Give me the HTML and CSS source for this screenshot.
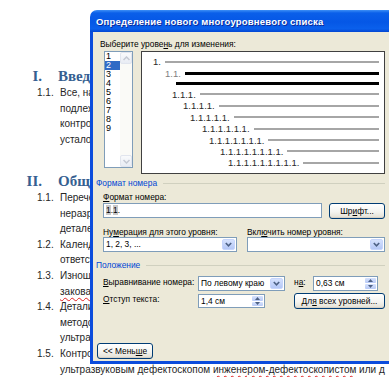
FILE: index.html
```html
<!DOCTYPE html>
<html lang="ru">
<head>
    <meta charset="utf-8">
    <title>Определение нового многоуровневого списка</title>
    <link rel="stylesheet" href="styles.css">
</head>
<body>
    <div class="doc">
        <h2 class="doc-head"><span class="head-num">I.</span><span>Введение</span></h2>
        <div class="doc-item">
            <span class="item-num">1.1.</span>
            <p>Все, находящиеся в эксплуатации узлы и детали,<br>подлежат периодическому неразрушающему<br>контролю с целью своевременного выявления<br>усталостных трещин и дефектов.</p>
        </div>

        <h2 class="doc-head second"><span class="head-num">II.</span><span>Общие положения</span></h2>
        <div class="doc-item">
            <span class="item-num">1.1.</span>
            <p>Перечень деталей, подлежащих<br>неразрушающему контролю, и методы контроля<br>деталей определяются настоящей инструкцией.</p>
        </div>
        <div class="doc-item">
            <span class="item-num">1.2.</span>
            <p>Календарные сроки контроля и<br>ответственность за их соблюдение.</p>
        </div>
        <div class="doc-item">
            <span class="item-num">1.3.</span>
            <p>Изношенные детали, подлежащие наплавке,<br><span class="spell">заковаными</span> не допускаются.</p>
        </div>
        <div class="doc-item">
            <span class="item-num">1.4.</span>
            <p>Детали, прошедшие ремонт, проверяются<br>методом магнитопорошкового или<br>ультразвукового контроля.</p>
        </div>
        <div class="doc-item">
            <span class="item-num">1.5.</span>
            <p>Контроль деталей выполняется<br>ультразвуковым дефектоскопом <span class="spell">инженером-дефектоскопистом</span> или д</p>
        </div>
    </div>

    <div class="dialog">
        <div class="dlg-title">Определение нового многоуровневого списка</div>
        <div class="dlg-body">
            <div class="lbl pick-lbl">Выберите урове<u>н</u>ь для изменения:</div>

            <div class="levels">
                <div class="listbox">
                    <ul class="level-list">
                        <li>1</li>
                        <li class="sel">2</li>
                        <li>3</li>
                        <li>4</li>
                        <li>5</li>
                        <li>6</li>
                        <li>7</li>
                        <li>8</li>
                        <li>9</li>
                    </ul>
                    <div class="vscroll">
                        <span class="sb-btn"><svg width="7" height="5" viewBox="0 0 7 5"><polyline points="0.5,4 3.5,1 6.5,4" /></svg></span>
                        <span class="sb-track"></span>
                        <span class="sb-btn"><svg width="7" height="5" viewBox="0 0 7 5"><polyline points="0.5,1 3.5,4 6.5,1" /></svg></span>
                    </div>
                </div>

                <div class="preview">
                    <div class="pv-row lv1"><span class="pv-num">1.</span><span class="pv-line"></span></div>
                    <div class="pv-row lv2 sel"><span class="pv-num">1.1.</span><span class="pv-line"></span></div>
                    <div class="pv-row cont sel"><span class="pv-line"></span></div>
                    <div class="pv-row lv3"><span class="pv-num">1.1.1.</span><span class="pv-line"></span></div>
                    <div class="pv-row lv4"><span class="pv-num">1.1.1.1.</span><span class="pv-line"></span></div>
                    <div class="pv-row lv5"><span class="pv-num">1.1.1.1.1.</span><span class="pv-line"></span></div>
                    <div class="pv-row lv6"><span class="pv-num">1.1.1.1.1.1.</span><span class="pv-line"></span></div>
                    <div class="pv-row lv7"><span class="pv-num">1.1.1.1.1.1.1.</span><span class="pv-line"></span></div>
                    <div class="pv-row lv8"><span class="pv-num">1.1.1.1.1.1.1.1.</span><span class="pv-line"></span></div>
                    <div class="pv-row lv9"><span class="pv-num">1.1.1.1.1.1.1.1.1.</span><span class="pv-line"></span></div>
                </div>
            </div>

            <div class="group">Формат номера</div>
            <div class="lbl field-lbl"><u>Ф</u>ормат номера:</div>
            <div class="fmt-row">
                <div class="textbox"><span class="code">1</span>.<span class="code">1</span>.</div>
                <div class="btn font-btn">Шр<u>и</u>фт...</div>
            </div>

            <div class="pair pair-lbls">
                <div class="lbl">Ну<u>м</u>ерация для этого уровня:</div>
                <div class="lbl">Вкл<u>ю</u>чить номер уровня:</div>
            </div>
            <div class="pair pair-ctrls">
                <div class="combo">
                    <span class="combo-text">1, 2, 3, ...</span>
                    <span class="drop"><svg width="7" height="5" viewBox="0 0 7 5"><polyline points="0.8,1 3.5,3.8 6.2,1" /></svg></span>
                </div>
                <div class="combo">
                    <span class="combo-text"></span>
                    <span class="drop"><svg width="7" height="5" viewBox="0 0 7 5"><polyline points="0.8,1 3.5,3.8 6.2,1" /></svg></span>
                </div>
            </div>

            <div class="group group-pos">Положение</div>
            <div class="pos">
                <div class="lbl"><u>В</u>ыравнивание номера:</div>
                <div class="combo align-combo">
                    <span class="combo-text">По левому краю</span>
                    <span class="drop"><svg width="7" height="5" viewBox="0 0 7 5"><polyline points="0.8,1 3.5,3.8 6.2,1" /></svg></span>
                </div>
                <div class="lbl">н<u>а</u>:</div>
                <div class="spin at-spin">
                    <span class="spin-text">0,63 см</span>
                    <span class="spin-btns">
                        <span><svg width="5" height="3" viewBox="0 0 5 3"><polygon points="0,3 2.5,0 5,3" /></svg></span>
                        <span><svg width="5" height="3" viewBox="0 0 5 3"><polygon points="0,0 2.5,3 5,0" /></svg></span>
                    </span>
                </div>

                <div class="lbl"><u>О</u>тступ текста:</div>
                <div class="spin indent-spin">
                    <span class="spin-text">1,4 см</span>
                    <span class="spin-btns">
                        <span><svg width="5" height="3" viewBox="0 0 5 3"><polygon points="0,3 2.5,0 5,3" /></svg></span>
                        <span><svg width="5" height="3" viewBox="0 0 5 3"><polygon points="0,0 2.5,3 5,0" /></svg></span>
                    </span>
                </div>
                <div class="btn all-btn">Дл<u>я</u> всех уровней...</div>
            </div>

            <div class="btn less-btn">&lt;&lt; Мень<u>ш</u>е</div>
        </div>
    </div>
</body>
</html>
```

FILE: styles.css
```css
html,
body {
    margin: 0;
    height: 100%;
    overflow: hidden;
}
body {
    position: relative;
    background: #fff;
}

/* document behind the dialog */
.doc {
    padding-top: 67px;
    font: 10px/15.6px "Liberation Sans", Arial, sans-serif;
    color: #262626;
}
.doc-head {
    display: grid;
    grid-template-columns: 42px auto;
    column-gap: 16px;
    margin: 0;
    font: bold 15px/18px "Liberation Serif", serif;
    color: #365f91;
}
.doc-head.second {
    margin-top: 24.6px;
}
.head-num {
    text-align: right;
}
.doc-item {
    display: grid;
    grid-template-columns: 23px auto;
    padding-left: 37px;
}
.doc-item p {
    margin: 0;
    white-space: nowrap;
}
.spell {
    text-decoration: underline wavy #e02020;
    text-decoration-thickness: 1px;
    text-underline-offset: 2px;
}

/* dialog */
.dialog {
    position: absolute;
    left: 90px;
    top: 10px;
    width: 305px;
    height: 354px;
    display: flex;
    flex-direction: column;
    font: 8.4px "Liberation Sans", Tahoma, sans-serif;
    color: #000;
}
.dlg-title {
    height: 22px;
    line-height: 23px;
    padding-left: 6px;
    border-radius: 7px 7px 0 0;
    background: linear-gradient(#3d8ff6 0, #0a5fe9 3px, #0557e6 55%, #0a60ec 85%, #0346d2 100%);
    color: #fff;
    font-weight: bold;
    font-size: 9.5px;
    letter-spacing: 0.2px;
    text-shadow: 1px 1px #0a2a9a;
    white-space: nowrap;
}
.dlg-body {
    flex: 1;
    display: flex;
    flex-direction: column;
    background: #ece9d8;
    border: 3px solid #0b4cdc;
    border-top: none;
    padding: 6px 7px 2px 3px;
}
.lbl {
    line-height: 12px;
    white-space: nowrap;
}
.pick-lbl {
    margin-left: 4px;
}

.levels {
    display: flex;
    gap: 8px;
    margin: 1px 0 0 8px;
    height: 123px;
}
.listbox {
    display: flex;
    width: 29px;
    height: 117px;
    box-sizing: border-box;
    border: 1px solid #7f9db9;
    background: #fff;
}
.level-list {
    list-style: none;
    margin: 0;
    padding: 0;
    width: 15px;
    font-size: 9px;
    line-height: 9px;
}
.level-list li {
    padding-left: 1px;
}
.level-list li.sel {
    background: #316ac5;
    color: #fff;
}
.vscroll {
    width: 12px;
    display: flex;
    flex-direction: column;
    background: #fafaf7;
}
.sb-btn {
    height: 12px;
    box-sizing: border-box;
    border: 1px solid #e1e5ee;
    border-radius: 2px;
    background: linear-gradient(#f9fafc, #e8ecf4);
    display: flex;
    align-items: center;
    justify-content: center;
}
.sb-btn polyline {
    fill: none;
    stroke: #c4c9d3;
    stroke-width: 1.5;
}
.sb-track {
    flex: 1;
}

.preview {
    flex: 1;
    box-sizing: border-box;
    border: 1px solid #404040;
    background: #fff;
    padding: 4px 5px 0 0;
    font-size: 9.5px;
    color: #2a2a2a;
}
.pv-row {
    display: flex;
    align-items: center;
    height: 11.4px;
    white-space: nowrap;
}
.pv-line {
    flex: 1;
    height: 2px;
    margin-left: 4px;
    background: #a6a6a6;
}
.pv-row.sel .pv-line {
    height: 3px;
    background: #000;
}
.pv-row.sel .pv-num {
    color: #808080;
}
.pv-row.cont {
    height: 10px;
    padding-left: 34px;
}
.pv-row.cont .pv-line {
    margin-left: 0;
}
.lv1 { padding-left: 11px; }
.lv2 { padding-left: 23px; }
.lv3 { padding-left: 30px; }
.lv4 { padding-left: 41px; }
.lv5 { padding-left: 48px; }
.lv6 { padding-left: 60px; }
.lv7 { padding-left: 67px; }
.lv8 { padding-left: 78px; }
.lv9 { padding-left: 86px; }

.group {
    display: flex;
    align-items: center;
    margin-top: 3px;
    line-height: 12px;
    color: #0046d5;
}
.group::after {
    content: "";
    flex: 1;
    height: 1px;
    margin-left: 6px;
    background: #d0d0bf;
}
.group-pos {
    margin-top: 7px;
}
.field-lbl {
    margin: 2px 0 0 7px;
}

.fmt-row {
    display: flex;
    justify-content: space-between;
    align-items: flex-start;
    height: 16px;
    margin-left: 7px;
}
.textbox {
    width: 219px;
    height: 15px;
    box-sizing: border-box;
    border: 1px solid #7f9db9;
    background: #fff;
    padding-left: 2px;
    line-height: 13px;
}
.code {
    background: #c8c8c8;
}

.btn {
    height: 16px;
    box-sizing: border-box;
    border: 1px solid #003c74;
    border-radius: 3px;
    background: linear-gradient(#fff, #f4f4f0 55%, #e2dfd3);
    box-shadow: inset 0 -1px #d6d0c5;
    line-height: 14px;
    text-align: center;
    white-space: nowrap;
}
.font-btn {
    width: 56px;
}

.pair {
    display: grid;
    grid-template-columns: 134px 138px;
    column-gap: 10px;
    margin-left: 7px;
}
.pair-lbls {
    margin-top: 8px;
}
.pair-lbls .lbl {
    line-height: 10px;
}

.combo,
.spin {
    display: flex;
    height: 15px;
    box-sizing: border-box;
    border: 1px solid #7f9db9;
    background: #fff;
}
.combo-text,
.spin-text {
    flex: 1;
    padding-left: 2px;
    line-height: 13px;
    white-space: nowrap;
}
.drop {
    width: 13px;
    margin: 1px;
    box-sizing: border-box;
    border: 1px solid #c6d5fc;
    border-radius: 2px;
    background: linear-gradient(#d6e2fd, #b4c7f6);
    display: flex;
    align-items: center;
    justify-content: center;
}
.drop polyline {
    fill: none;
    stroke: #4d6185;
    stroke-width: 1.6;
}

.pos {
    display: grid;
    grid-template-columns: 95px 96px 19px 72px;
    grid-template-rows: 15px 16px;
    row-gap: 2px;
    align-items: center;
    margin: 5px 0 0 7px;
}
.pos .lbl {
    align-self: start;
}
.align-combo {
    width: 87px;
}
.at-spin {
    width: 65px;
}
.indent-spin {
    width: 67px;
    height: 14px;
}
.indent-spin .spin-text {
    line-height: 12px;
}
.spin-btns {
    width: 11px;
    display: flex;
    flex-direction: column;
    gap: 1px;
    padding: 1px;
}
.spin-btns span {
    flex: 1;
    border-radius: 1px;
    background: linear-gradient(#d6e2fd, #b8caf6);
    display: flex;
    align-items: center;
    justify-content: center;
}
.spin-btns polygon {
    fill: #4d6185;
}
.all-btn {
    grid-column: 3 / 5;
}

.less-btn {
    width: 56px;
    margin: auto 0 0 1px;
}
```
